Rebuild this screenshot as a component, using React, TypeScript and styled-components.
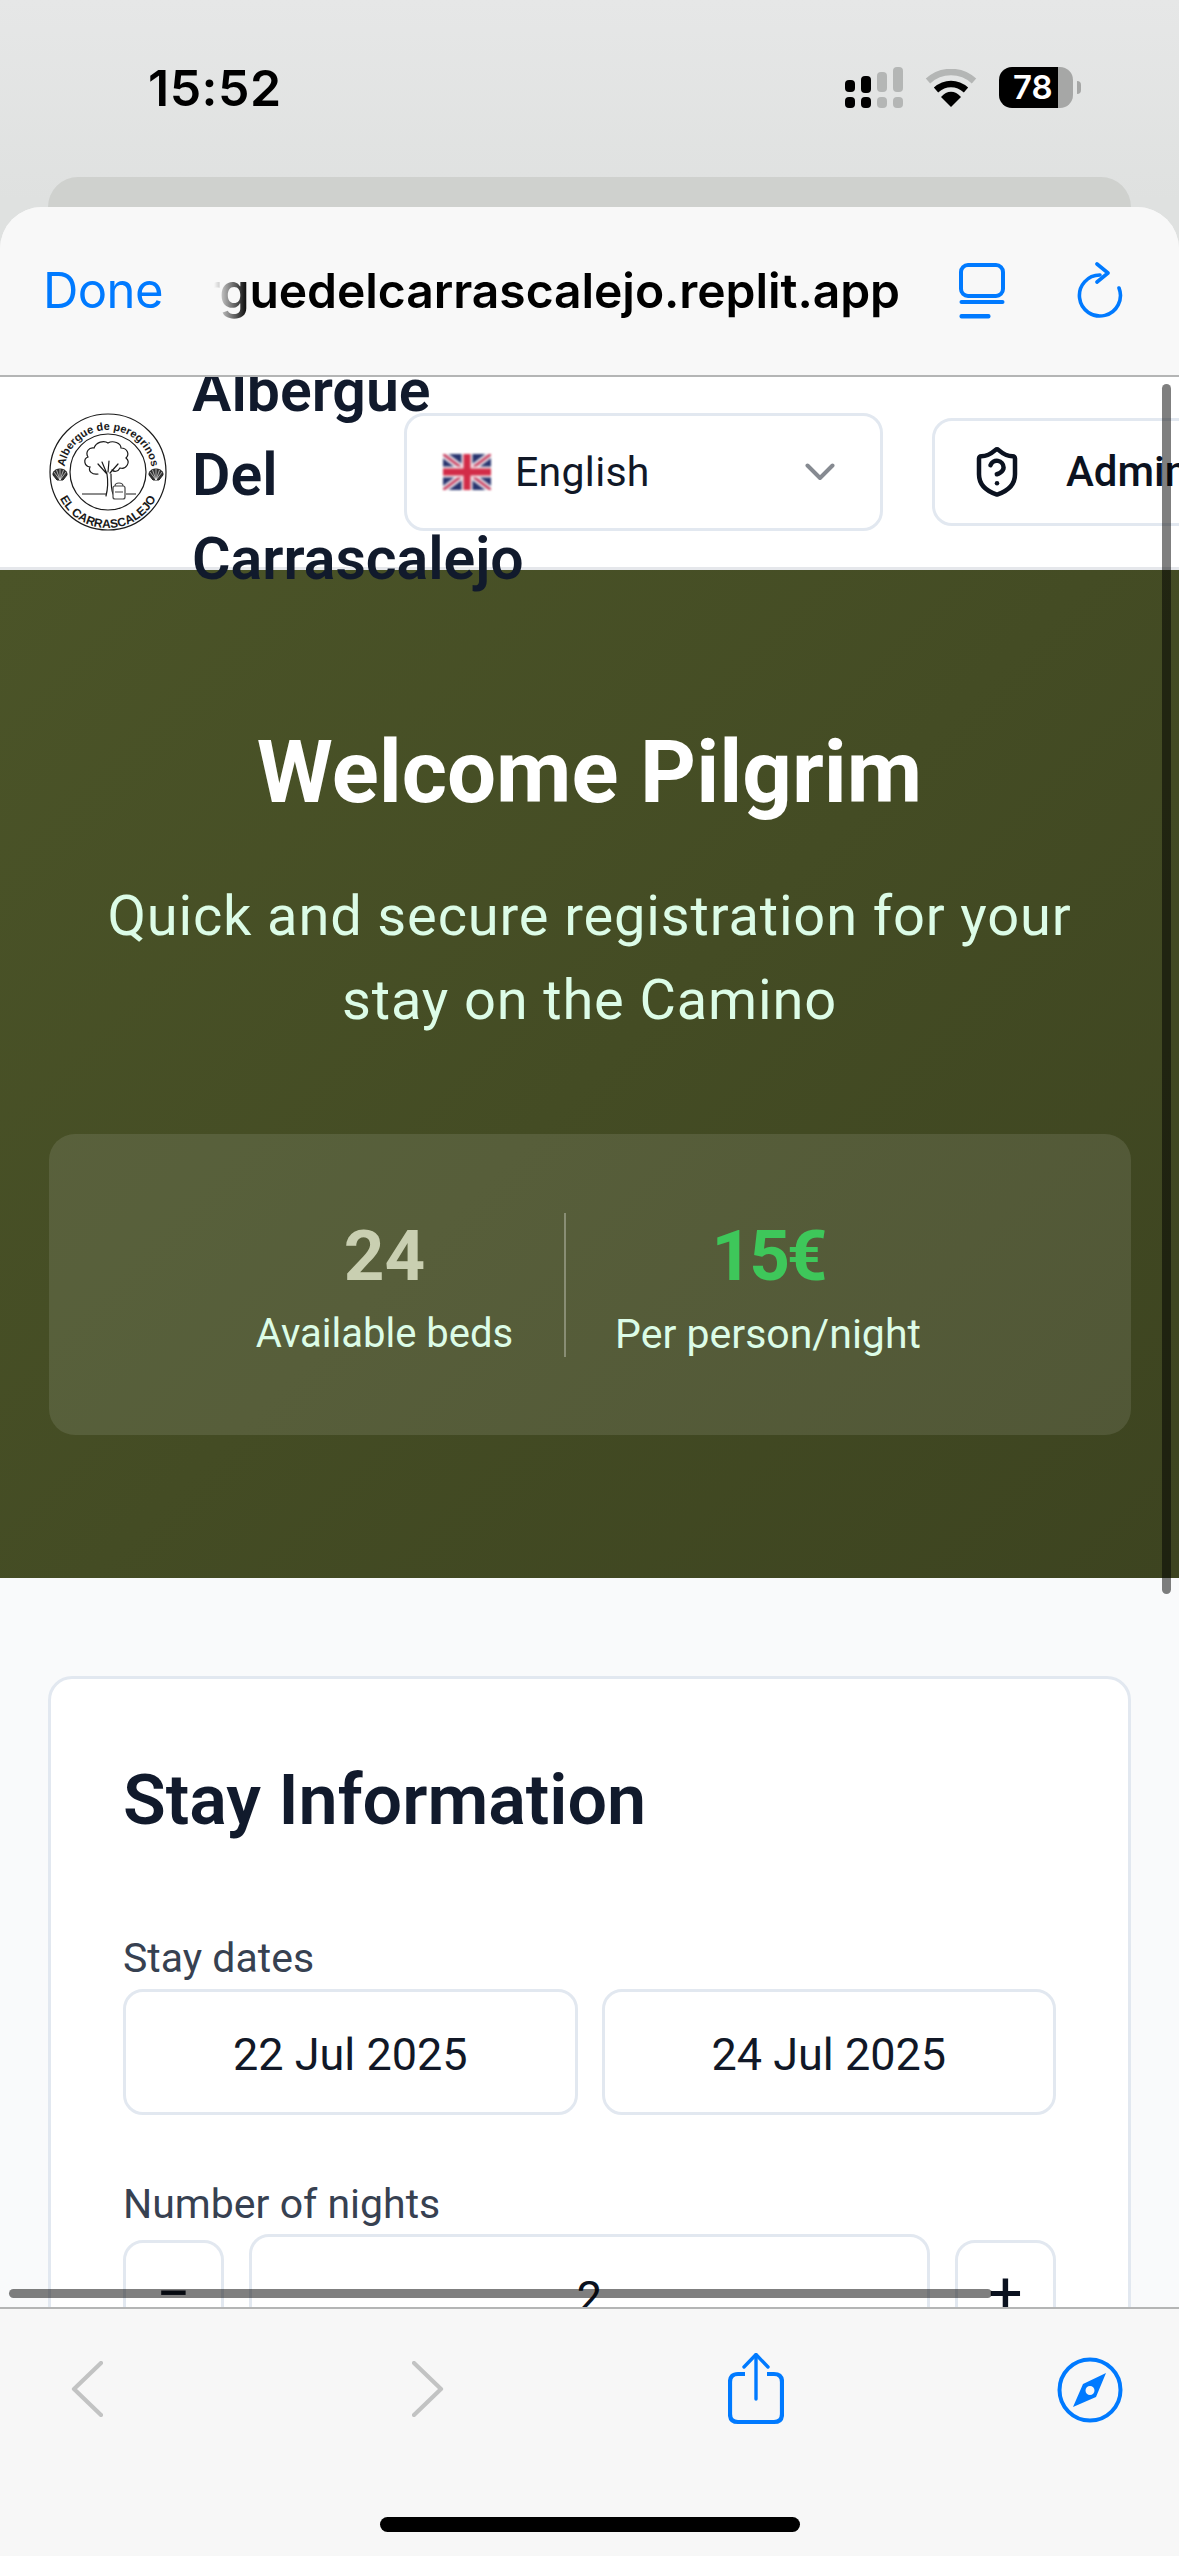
import React from "react";
import styled, { createGlobalStyle } from "styled-components";

const Global = createGlobalStyle`
  html, body { margin: 0; padding: 0; background: #e4e5e5; }
  * { box-sizing: border-box; }
`;

const ui = `"Roboto", "Liberation Sans", sans-serif`;
const ios = `"Inter", "Liberation Sans", sans-serif`;

const Phone = styled.div`
  position: relative;
  width: 1179px;
  height: 2556px;
  overflow: hidden;
  display: flex;
  flex-direction: column;
  background: linear-gradient(180deg, #e6e7e7 0%, #dfe1e0 200px);
`;

const StatusBar = styled.div`
  height: 177px;
  flex: none;
  display: flex;
  align-items: flex-start;
  padding: 67px 98px 0 148px;
  justify-content: space-between;
`;

const Clock = styled.div`
  font: 600 50px/42px ${ios};
  letter-spacing: 0.5px;
  color: #000;
`;

const StatusIcons = styled.div`
  display: flex;
  align-items: center;
  gap: 22px;
`;

const BatteryWrap = styled.div`
  display: flex;
  align-items: center;
  gap: 4px;
`;

const Battery = styled.div`
  position: relative;
  width: 74px;
  height: 41px;
  border-radius: 13px;
  overflow: hidden;
  background: linear-gradient(90deg, #000 0 59px, #a6a7a6 59px 100%);
  display: flex;
  align-items: center;
  padding-left: 14px;
  font: 600 33px/41px ${ios};
  color: #fff;
`;

const BatteryTip = styled.div`
  width: 4px;
  height: 13px;
  border-radius: 0 4px 4px 0;
  background: #a6a7a6;
`;

const PeekTab = styled.div`
  height: 60px;
  flex: none;
  margin: 0 48px -30px;
  border-radius: 30px 30px 0 0;
  background: #cfd1ce;
`;

const Sheet = styled.div`
  position: relative;
  flex: 1;
  min-height: 0;
  display: flex;
  flex-direction: column;
  border-radius: 42px 42px 0 0;
  overflow: hidden;
  background: #f7f7f7;
`;

const NavBar = styled.div`
  height: 170px;
  flex: none;
  display: flex;
  align-items: center;
  padding: 0 54px 0 43px;
  border-bottom: 2px solid #b4b5b5;
  background: #f8f8f8;
`;

const Done = styled.div`
  font: 400 49px/60px ${ios};
  letter-spacing: -0.6px;
  color: #007aff;
  width: 171px;
  flex: none;
`;

const UrlClip = styled.div`
  width: 686px;
  flex: none;
  overflow: hidden;
  display: flex;
  justify-content: flex-end;
  -webkit-mask-image: linear-gradient(90deg, transparent 0, #000 34px);
  mask-image: linear-gradient(90deg, transparent 0, #000 34px);
`;

const UrlText = styled.div`
  font: 600 48px/60px ${ios};
  letter-spacing: -0.05px;
  color: #000;
  white-space: nowrap;
  flex: none;
`;

const NavIcons = styled.div`
  display: flex;
  align-items: center;
  gap: 72px;
  margin-left: 59px;
`;

const Web = styled.div`
  position: relative;
  flex: 1;
  min-height: 0;
  overflow: hidden;
  background: #f9fafb;
`;

const Header = styled.header`
  position: relative;
  z-index: 1;
  height: 193px;
  display: flex;
  align-items: center;
  padding-left: 48px;
  background: #fff;
  border-bottom: 3px solid #e5e7eb;
`;

const LogoBox = styled.div`
  width: 120px;
  height: 120px;
  flex: none;
`;

const BrandName = styled.div`
  width: 211px;
  flex: none;
  margin: 5px 0 0 24px;
  font: 600 59px/84px ${ui};
  color: #111a2c;
`;

const LangSelect = styled.div`
  width: 479px;
  height: 118px;
  flex: none;
  margin-left: 1px;
  display: flex;
  align-items: center;
  padding: 0 45px 0 36px;
  border: 3px solid #e2e8f0;
  border-radius: 20px;
  background: #fff;
`;

const FlagWrap = styled.div`
  display: flex;
  filter: blur(0.9px);
`;

const LangName = styled.span`
  flex: 1;
  margin-left: 24px;
  font: 400 41px/50px ${ui};
  letter-spacing: 0.3px;
  color: #111827;
`;

const AdminButton = styled.div`
  width: 320px;
  height: 108px;
  flex: none;
  margin-left: 49px;
  display: flex;
  align-items: center;
  padding-left: 35px;
  border: 3px solid #e2e8f0;
  border-radius: 20px;
`;

const AdminLabel = styled.span`
  margin-left: 42px;
  font: 500 42px/50px ${ui};
  color: #0b1220;
`;

const Hero = styled.section`
  height: 1008px;
  padding: 158px 48px 0;
  background: linear-gradient(135deg, #4b5428 0%, #3d4420 100%);
  display: flex;
  flex-direction: column;
  align-items: center;
`;

const HeroTitle = styled.h1`
  margin: 0;
  font: 700 87px/88px ${ui};
  color: #fff;
  text-align: center;
`;

const HeroSub = styled.p`
  margin: 58px 0 0;
  width: 1040px;
  font: 400 56px/84px ${ui};
  letter-spacing: 0.85px;
  color: #dcfce7;
  text-align: center;
`;

const StatsCard = styled.div`
  margin-top: 92px;
  width: 1082px;
  height: 301px;
  flex: none;
  display: flex;
  justify-content: center;
  align-items: center;
  padding-right: 4px;
  border-radius: 26px;
  background: rgba(255, 255, 255, 0.1);
`;

const Stat = styled.div<{ $width: number }>`
  width: ${(p) => p.$width}px;
  height: 144px;
  flex: none;
  display: flex;
  flex-direction: column;
  align-items: center;
`;

const StatValue = styled.div<{ $color: string; $spacing: number }>`
  margin-top: 5px;
  font: 700 71px/76px ${ui};
  letter-spacing: ${(p) => p.$spacing}px;
  color: ${(p) => p.$color};
`;

const StatLabel = styled.div<{ $size: number }>`
  margin-top: 15px;
  font: 400 ${(p) => p.$size}px/50px ${ui};
  color: #dcfce7;
  white-space: nowrap;
`;

const StatDivider = styled.div`
  width: 2px;
  height: 144px;
  flex: none;
  background: rgba(255, 255, 255, 0.3);
`;

const Main = styled.main`
  padding: 98px 48px 0;
`;

const Card = styled.section`
  padding: 77px 72px 40px;
  border: 3px solid #e2e8f0;
  border-radius: 24px;
  background: #fff;
`;

const CardTitle = styled.h2`
  margin: 0;
  font: 600 70px/88px ${ui};
  color: #111a2c;
`;

const FieldLabel = styled.label<{ $top: number }>`
  display: block;
  margin-top: ${(p) => p.$top}px;
  font: 400 41px/50px ${ui};
  color: #374151;
`;

const DateRow = styled.div`
  margin-top: 6px;
  display: grid;
  grid-template-columns: 1fr 1fr;
  gap: 24px;
`;

const DateField = styled.div`
  height: 126px;
  padding-top: 6px;
  display: flex;
  align-items: center;
  justify-content: center;
  border: 3px solid #e2e8f0;
  border-radius: 20px;
  font: 400 45px/50px ${ui};
  color: #111827;
`;

const NightsRow = styled.div`
  margin-top: 5px;
  display: flex;
  gap: 25px;
`;

const StepButton = styled.div`
  width: 101px;
  height: 126px;
  flex: none;
  margin-top: 6px;
  padding-top: 18px;
  display: flex;
  justify-content: center;
  border: 3px solid #e2e8f0;
  border-radius: 20px;
  font: 400 60px/66px ${ui};
  color: #0b1220;
`;

const NightsField = styled.div`
  flex: 1;
  height: 130px;
  padding-top: 26px;
  border: 3px solid #e2e8f0;
  border-radius: 20px;
  text-align: center;
  font: 400 45px/70px ${ui};
  color: #0b1220;
`;

const VScroll = styled.div`
  position: absolute;
  z-index: 3;
  right: 8px;
  top: 7px;
  width: 9px;
  height: 1210px;
  border-radius: 5px;
  background: rgba(0, 0, 0, 0.5);
`;

const HScroll = styled.div`
  position: absolute;
  z-index: 3;
  left: 9px;
  bottom: 9px;
  width: 983px;
  height: 9px;
  border-radius: 5px;
  background: rgba(0, 0, 0, 0.5);
`;

const Toolbar = styled.div`
  height: 249px;
  flex: none;
  position: relative;
  display: flex;
  align-items: flex-start;
  padding: 44px 0 0 71px;
  border-top: 2px solid #b4b5b5;
  background: #f7f7f7;
`;

const ToolIcon = styled.div<{ $left: number; $top: number }>`
  margin-left: ${(p) => p.$left}px;
  margin-top: ${(p) => p.$top}px;
  display: flex;
`;

const HomeBar = styled.div`
  position: absolute;
  left: 380px;
  bottom: 24px;
  width: 420px;
  height: 15px;
  border-radius: 8px;
  background: #000;
`;

const Signal = () => (
  <svg width="58" height="41" viewBox="0 0 58 41">
    <rect x="0" y="13" width="10" height="12" rx="4" fill="#000" />
    <rect x="16" y="9" width="10" height="17" rx="4" fill="#000" />
    <rect x="32" y="5" width="10" height="20" rx="4" fill="#b4b6b5" />
    <rect x="48" y="0" width="10" height="25" rx="4" fill="#b4b6b5" />
    <rect x="0" y="30" width="10" height="11" rx="4" fill="#000" />
    <rect x="16" y="30" width="10" height="11" rx="4" fill="#000" />
    <rect x="32" y="30" width="10" height="11" rx="4" fill="#b4b6b5" />
    <rect x="48" y="30" width="10" height="11" rx="4" fill="#b4b6b5" />
  </svg>
);

const Wifi = () => (
  <svg width="52" height="38" viewBox="0 0 52 38">
    <path d="M3 12 C16 0 36 0 49 12" fill="none" stroke="#b4b6b5" strokeWidth="6.5" />
    <path d="M11 21 C20 13 32 13 41 21" fill="none" stroke="#000" strokeWidth="6.5" />
    <path d="M16 28 C22 21 30 21 36 28 L26 38 Z" fill="#000" />
  </svg>
);

const TabsIcon = () => (
  <svg width="46" height="56" viewBox="0 0 46 56">
    <rect x="2" y="2" width="42" height="31" rx="7" fill="none" stroke="#007aff" strokeWidth="4" />
    <rect x="0.5" y="37" width="45" height="4" rx="2" fill="#007aff" />
    <rect x="0.5" y="51" width="31" height="4.5" rx="2" fill="#007aff" />
  </svg>
);

const ReloadIcon = () => (
  <svg width="46" height="58" viewBox="0 0 46 58">
    <path d="M23 13 A20.5 20.5 0 1 0 42 26" fill="none" stroke="#007aff" strokeWidth="3.6" strokeLinecap="round" />
    <path d="M20 2 L31 11 L20 20" fill="none" stroke="#007aff" strokeWidth="3.6" strokeLinecap="round" strokeLinejoin="round" />
  </svg>
);

const Scallop = ({ x, y }: { x: number; y: number }) => (
  <g transform={`translate(${x} ${y})`} stroke="#222" strokeWidth="1" fill="none">
    <path d="M-7 2 C-8 -6 8 -6 7 2 L3 7 L-3 7 Z" fill="#333" />
    <path d="M0 7 L0 -4 M0 7 L-3.5 -3 M0 7 L3.5 -3 M0 7 L-6 -1 M0 7 L6 -1" stroke="#fff" strokeWidth="0.6" />
  </g>
);

const Logo = () => (
  <svg width="120" height="120" viewBox="0 0 120 120">
    <defs>
      <path id="arcTop" d="M 16 62 A 44 44 0 1 1 104 62" />
      <path id="arcBottom" d="M 6 62 A 54 54 0 0 0 114 62" />
    </defs>
    <circle cx="60" cy="60" r="58" fill="#fff" stroke="#1a1a1a" strokeWidth="1.2" />
    <circle cx="60" cy="60" r="38" fill="none" stroke="#1a1a1a" strokeWidth="1.2" />
    <text fontFamily="'Liberation Sans', sans-serif" fontSize="11" fill="#1a1a1a" fontWeight="700">
      <textPath href="#arcTop" startOffset="50%" textAnchor="middle">Albergue de peregrinos</textPath>
    </text>
    <text fontFamily="'Liberation Sans', sans-serif" fontSize="12" fill="#1a1a1a" fontWeight="700">
      <textPath href="#arcBottom" startOffset="50%" textAnchor="middle">EL CARRASCALEJO</textPath>
    </text>
    <Scallop x={12} y={61} />
    <Scallop x={108} y={61} />
    <path
      d="M50 62 C44 63 40 59 42 55 C36 54 35 47 40 45 C37 40 41 35 46 36 C48 30 56 28 60 31 C65 28 73 31 73 36 C79 36 82 42 78 46 C83 50 78 58 72 56 C70 60 66 60 64 58"
      fill="none" stroke="#1a1a1a" strokeWidth="1.2" strokeLinecap="round"
    />
    <path
      d="M58 84 C60 76 60 68 59 62 L50 52 M59 62 L54 50 M60 60 L61 49 M62 61 L70 52 M63 62 C63 70 63 78 65 82"
      fill="none" stroke="#1a1a1a" strokeWidth="1.2" strokeLinecap="round"
    />
    <path d="M34 82 L58 82 M78 82 L88 82" stroke="#1a1a1a" strokeWidth="1" />
    <rect x="65" y="74" width="12" height="13" rx="2" fill="#fff" stroke="#444" strokeWidth="1.2" />
    <path d="M67 74 C67 70 75 70 75 74 M67 80 L75 80" fill="none" stroke="#444" strokeWidth="1.1" />
  </svg>
);

const UkFlag = () => (
  <svg width="48" height="36" viewBox="0 0 48 36">
    <rect width="48" height="36" fill="#27336e" />
    <path d="M0 0 L48 36 M48 0 L0 36" stroke="#e6dfe6" strokeWidth="7" />
    <path d="M0 0 L48 36 M48 0 L0 36" stroke="#c8385a" strokeWidth="2.4" />
    <path d="M24 0 V36 M0 18 H48" stroke="#f4e9ec" strokeWidth="11" />
    <path d="M24 0 V36 M0 18 H48" stroke="#d22c48" strokeWidth="7" />
  </svg>
);

const Chevron = () => (
  <svg width="30" height="18" viewBox="0 0 30 18">
    <path d="M2.5 2.5 L15 15 L27.5 2.5" fill="none" stroke="#868a91" strokeWidth="4" strokeLinecap="round" strokeLinejoin="round" />
  </svg>
);

const ShieldQuestion = () => (
  <svg width="54" height="54" viewBox="0 0 24 24" fill="none" stroke="#0b1220" strokeWidth="2" strokeLinecap="round" strokeLinejoin="round">
    <path d="M20 13c0 5-3.5 7.5-7.66 8.95a1 1 0 0 1-.67-.01C7.5 20.5 4 18 4 13V6a1 1 0 0 1 1-1c2 0 4.5-1.2 6.24-2.72a1.17 1.17 0 0 1 1.52 0C14.51 3.81 17 5 19 5a1 1 0 0 1 1 1z" />
    <path d="M9.1 9a3 3 0 0 1 5.82 1c0 2-3 3-3 3" />
    <path d="M12 17h.01" />
  </svg>
);

const BackIcon = ({ flip }: { flip?: boolean }) => (
  <svg width="32" height="56" viewBox="0 0 32 56">
    <path
      d={flip ? "M2 2 L29 28 L2 54" : "M30 2 L3 28 L30 54"}
      fill="none" stroke="#c2c3c3" strokeWidth="4.2" strokeLinecap="round" strokeLinejoin="round"
    />
  </svg>
);

const ShareIcon = () => (
  <svg width="56" height="72" viewBox="0 0 56 72">
    <path d="M17 21 H10 Q2 21 2 29 V61 Q2 69 10 69 H46 Q54 69 54 61 V29 Q54 21 46 21 H39" fill="none" stroke="#007aff" strokeWidth="4.2" />
    <path d="M28 46 V2" stroke="#007aff" strokeWidth="3.4" strokeLinecap="round" />
    <path d="M16 14 L28 1.5 L40 14" fill="none" stroke="#007aff" strokeWidth="3.4" strokeLinecap="round" strokeLinejoin="round" />
  </svg>
);

const CompassIcon = () => (
  <svg width="66" height="66" viewBox="0 0 66 66">
    <circle cx="33" cy="33" r="30.5" fill="none" stroke="#007aff" strokeWidth="4" />
    <path fillRule="evenodd" d="M49 16 L39 40 L16 50 L26 27 Z M33 29 A4.5 4.5 0 1 0 33 38 A4.5 4.5 0 1 0 33 29 Z" fill="#007aff" />
  </svg>
);

export default function App() {
  return (
    <Phone>
      <Global />
      <StatusBar>
        <Clock>15:52</Clock>
        <StatusIcons>
          <Signal />
          <Wifi />
          <BatteryWrap>
            <Battery>78</Battery>
            <BatteryTip />
          </BatteryWrap>
        </StatusIcons>
      </StatusBar>
      <PeekTab />
      <Sheet>
        <NavBar>
          <Done>Done</Done>
          <UrlClip>
            <UrlText>alberguedelcarrascalejo.replit.app</UrlText>
          </UrlClip>
          <NavIcons>
            <TabsIcon />
            <ReloadIcon />
          </NavIcons>
        </NavBar>
        <Web>
          <Header>
            <LogoBox>
              <Logo />
            </LogoBox>
            <BrandName>Albergue Del Carrascalejo</BrandName>
            <LangSelect>
              <FlagWrap>
                <UkFlag />
              </FlagWrap>
              <LangName>English</LangName>
              <Chevron />
            </LangSelect>
            <AdminButton>
              <ShieldQuestion />
              <AdminLabel>Admin</AdminLabel>
            </AdminButton>
          </Header>
          <Hero>
            <HeroTitle>Welcome Pilgrim</HeroTitle>
            <HeroSub>Quick and secure registration for your stay on the Camino</HeroSub>
            <StatsCard>
              <Stat $width={359}>
                <StatValue $color="#c9cfb1" $spacing={0}>24</StatValue>
                <StatLabel $size={40}>Available beds</StatLabel>
              </Stat>
              <StatDivider />
              <Stat $width={404}>
                <StatValue $color="#3ec75a" $spacing={-3}>15€</StatValue>
                <StatLabel $size={41}>Per person/night</StatLabel>
              </Stat>
            </StatsCard>
          </Hero>
          <Main>
            <Card>
              <CardTitle>Stay Information</CardTitle>
              <FieldLabel $top={89}>Stay dates</FieldLabel>
              <DateRow>
                <DateField>22 Jul 2025</DateField>
                <DateField>24 Jul 2025</DateField>
              </DateRow>
              <FieldLabel $top={64}>Number of nights</FieldLabel>
              <NightsRow>
                <StepButton>−</StepButton>
                <NightsField>2</NightsField>
                <StepButton>+</StepButton>
              </NightsRow>
            </Card>
          </Main>
          <VScroll />
          <HScroll />
        </Web>
        <Toolbar>
          <ToolIcon $left={0} $top={8}>
            <BackIcon />
          </ToolIcon>
          <ToolIcon $left={309} $top={8}>
            <BackIcon flip />
          </ToolIcon>
          <ToolIcon $left={284} $top={0}>
            <ShareIcon />
          </ToolIcon>
          <ToolIcon $left={273} $top={4}>
            <CompassIcon />
          </ToolIcon>
          <HomeBar />
        </Toolbar>
      </Sheet>
    </Phone>
  );
}
